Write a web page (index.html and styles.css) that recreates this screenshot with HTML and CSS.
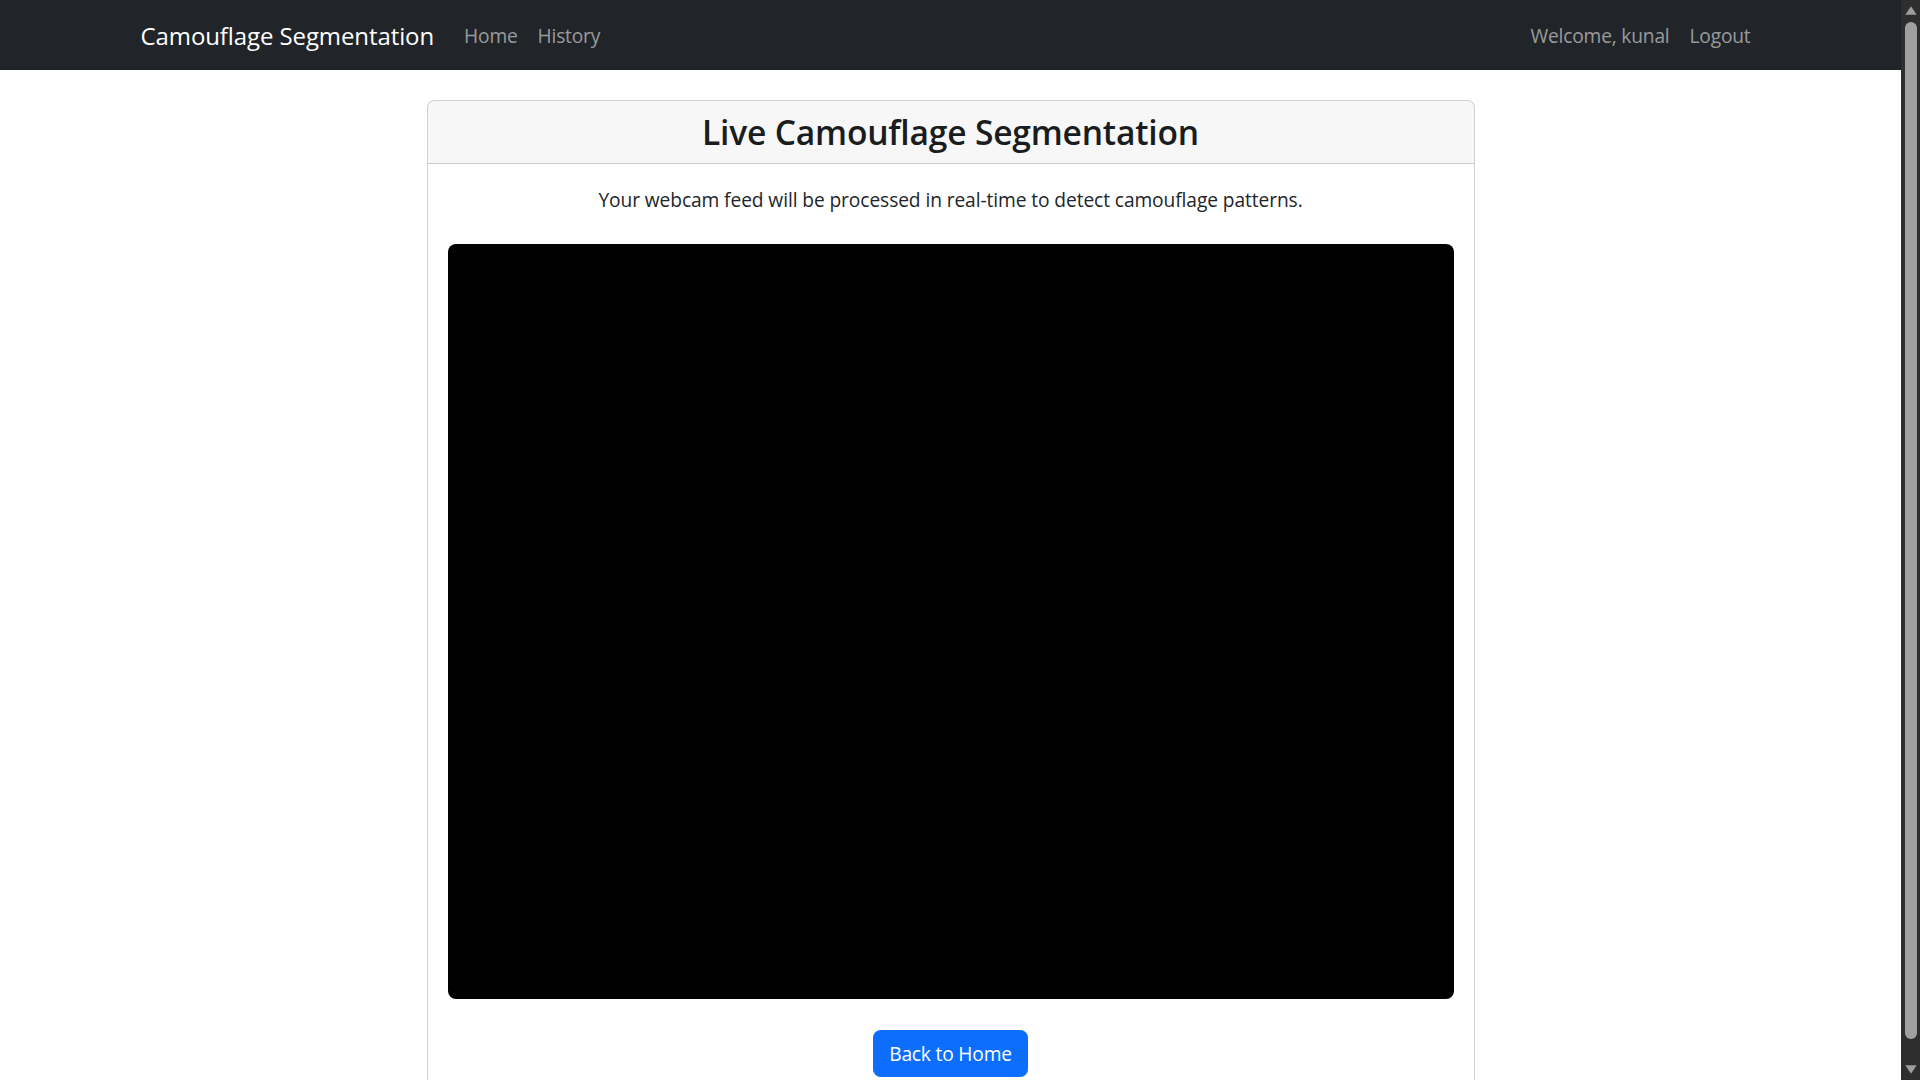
FILE: index.html
```html
<!DOCTYPE html>
<html lang="en">
<head>
<meta charset="utf-8">
<title>Live Camouflage Segmentation</title>
<link rel="stylesheet" href="styles.css">
</head>
<body>
<nav class="navbar">
  <div class="container nav-inner">
    <a class="brand" href="#">Camouflage Segmentation</a>
    <ul class="nav-links">
      <li><a class="nav-link" href="#">Home</a></li>
      <li><a class="nav-link" href="#">History</a></li>
    </ul>
    <ul class="nav-links nav-right">
      <li><span class="nav-link">Welcome, kunal</span></li>
      <li><a class="nav-link" href="#">Logout</a></li>
    </ul>
  </div>
</nav>
<main class="container main">
  <div class="card">
    <div class="card-header">
      <h3 class="card-title">Live Camouflage Segmentation</h3>
    </div>
    <div class="card-body">
      <p class="intro">Your webcam feed will be processed in real-time to detect camouflage patterns.</p>
      <div class="video-feed"></div>
      <div class="actions">
        <a class="btn-primary" href="#">Back to Home</a>
      </div>
    </div>
  </div>
</main>
<div class="scrollbar" aria-hidden="true">
  <div class="sb-btn">
    <svg width="12" height="9" viewBox="0 0 12 9"><path d="M6 0.3 L11.7 8.7 L0.3 8.7 Z" fill="#9d9d9d"/></svg>
  </div>
  <div class="sb-thumb"></div>
  <div class="sb-btn">
    <svg width="12" height="9" viewBox="0 0 12 9"><path d="M0.3 0.3 L11.7 0.3 L6 8.7 Z" fill="#9d9d9d"/></svg>
  </div>
</div>
</body>
</html>
```
FILE: styles.css
```css
html {
  overflow: hidden;
}

body {
  margin: 0 19px 0 0;
  font-family: "Open Sans", "Noto Sans", "Liberation Sans", sans-serif;
  font-size: 19.2px;
  letter-spacing: -0.01em;
  line-height: 1.5;
  color: #212529;
  background: #fff;
}

a {
  text-decoration: none;
}

.container {
  box-sizing: border-box;
  max-width: 1650px;
  margin: 0 auto;
  padding: 0 15px;
}

.navbar {
  background: #212529;
  padding: 10px 0;
}

.nav-inner {
  display: flex;
  align-items: center;
}

.brand {
  color: #fff;
  font-size: 24px;
  letter-spacing: -0.004em;
  line-height: 37.5px;
  padding: 7px 0 5.5px;
  margin-right: 20px;
}

.nav-links {
  display: flex;
  list-style: none;
  margin: 0;
  padding: 0;
}

.nav-right {
  margin-left: auto;
}

.nav-link {
  display: block;
  padding: 11px 10px 9px;
  line-height: 30px;
  color: rgba(255, 255, 255, 0.55);
}

.main {
  margin-top: 30px;
}

.card {
  box-sizing: border-box;
  max-width: 1048px;
  margin: 0 auto;
  border: 1px solid rgba(0, 0, 0, 0.175);
  border-radius: 7.5px;
  background: #fff;
}

.card-header {
  padding: 10px 20px;
  background: rgba(0, 0, 0, 0.03);
  border-bottom: 1px solid rgba(0, 0, 0, 0.175);
  border-radius: 6.5px 6.5px 0 0;
  text-align: center;
}

.card-title {
  margin: 0;
  font-size: 33.6px;
  font-weight: 600;
  line-height: 42px;
  color: #1a1d20;
}

.card-body {
  padding: 20px;
  text-align: center;
}

.intro {
  margin: 0 0 29px;
  padding-top: 1px;
  line-height: 30px;
  letter-spacing: -0.005em;
}

.video-feed {
  width: 100%;
  aspect-ratio: 4 / 3;
  background: #000;
  border-radius: 8px;
}

.actions {
  margin-top: 31px;
}

.btn-primary {
  display: inline-block;
  padding: 8px 15px 7px;
  font-size: 19.2px;
  line-height: 30px;
  color: #fff;
  background: #0d6efd;
  border: 1.25px solid #0d6efd;
  border-radius: 7.5px;
}

.scrollbar {
  position: fixed;
  top: 0;
  right: 0;
  width: 19px;
  height: 100vh;
  background: #2e2e2e;
  display: flex;
  flex-direction: column;
  align-items: center;
}

.sb-btn {
  height: 21px;
  flex: none;
  display: flex;
  align-items: center;
  justify-content: center;
}

.sb-btn svg {
  display: block;
}

.sb-thumb {
  flex: 1;
  width: 12px;
  margin: 1px 0 20px;
  background: #a0a0a0;
  border-radius: 6px;
}
```
